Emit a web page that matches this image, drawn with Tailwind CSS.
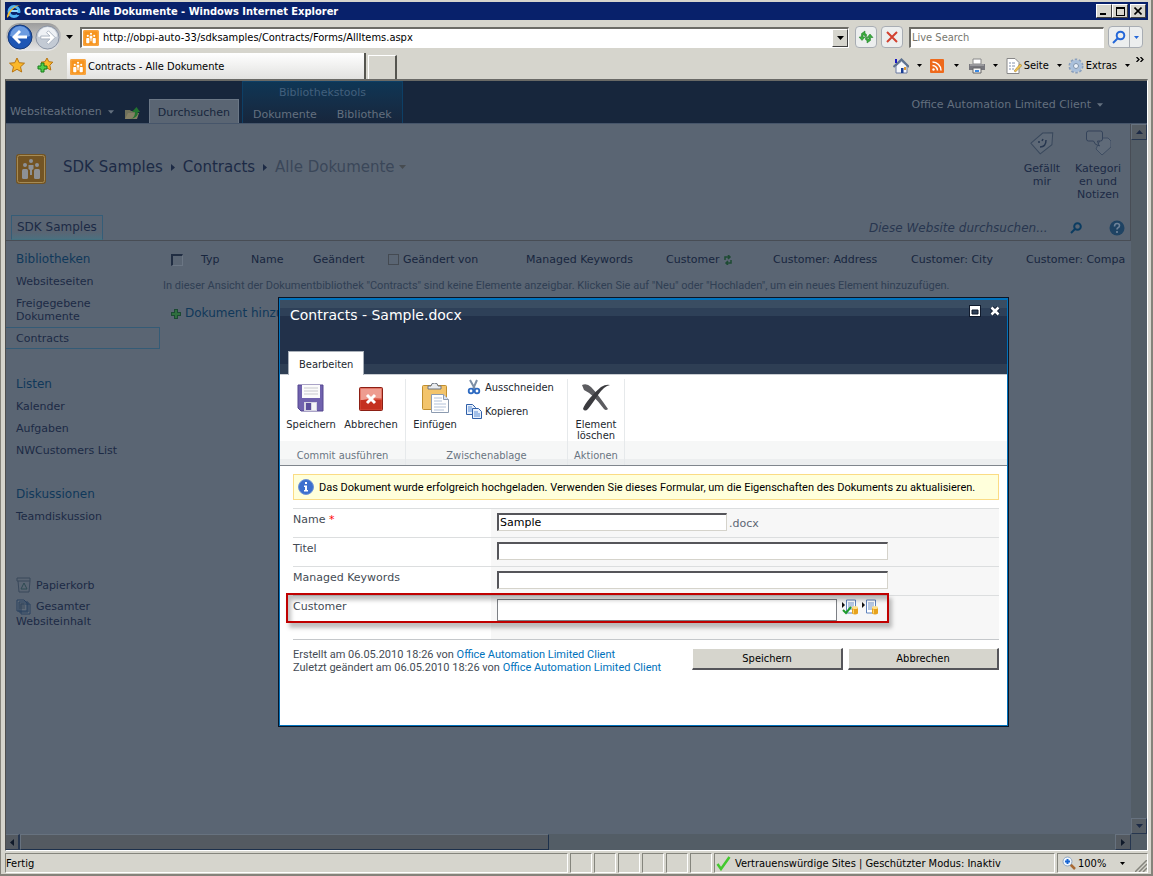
<!DOCTYPE html>
<html lang="de">
<head>
<meta charset="utf-8">
<title>Contracts - Alle Dokumente</title>
<script src="https://cdn.jsdelivr.net/npm/@tailwindcss/browser@4"></script>
</head>
<body class="h-screen overflow-hidden bg-[#d6d5cd] font-['DejaVu_Sans_Condensed','DejaVu_Sans',sans-serif] text-[11px] leading-[13px] text-black">
<svg class="hidden">
  <symbol id="people" viewBox="0 0 30 30"><rect width="30" height="30" rx="3" fill="currentColor"/><rect x="1.500" y="1.500" width="27" height="27" rx="2" fill="none" stroke="#fff" stroke-opacity=".45"/><g fill="#fff"><circle cx="9" cy="11" r="2"/><circle cx="15" cy="7" r="2"/><circle cx="21" cy="11" r="2"/><rect x="6" y="15" width="6" height="10" rx="1.500"/><rect x="18" y="15" width="6" height="10" rx="1.500"/><path d="M12.500 11h5v4l-1.500 1v5h-2v-5l-1.500-1z"/></g></symbol>
  <symbol id="down" viewBox="0 0 7 4"><path d="M0 0h7L3.500 4z" fill="currentColor"/></symbol>
  <symbol id="db" viewBox="0 0 16 16"><path d="M0 3v6l3-3z" fill="#111"/><path d="M4.500 1h9v13h-9z" fill="#fff" stroke="#5f83bd"/><path d="M6 4h6M6 6h6M6 8h6M6 10h4" stroke="#6d8fc4"/><path d="M10 8.500v6q3 2 6 0v-6z" fill="#e7a21c"/><ellipse cx="13" cy="8.500" rx="3" ry="1.500" fill="#ffe08a"/><path d="M11.500 10.500v4" stroke="#ffd86b"/></symbol>
</svg>
<div class="flex h-full flex-col border-r-2 border-b-2 border-l border-[#85837b] pr-[3px] pl-1">
  <!-- Window title -->
  <header class="mt-0.5 flex h-[18px] shrink-0 items-center bg-[#08216b] pr-0.5 pl-px text-white">
    <svg class="mr-0.5 size-4" viewBox="0 0 16 16"><circle cx="8" cy="8.500" r="5" fill="none" stroke="#4fb4f4" stroke-width="3"/><path d="M4 8h8" stroke="#8fd6ff" stroke-width="2"/><path d="M10 10h5v2h-4z" fill="#08216b"/><path d="M1 15C0 10 8 1 15 2c-5 0-11 6-12 11z" fill="#f5bc2e"/></svg>
    <h1 class="grow font-bold">Contracts - Alle Dokumente - Windows Internet Explorer</h1>
    <div class="flex h-3.5">
      <button aria-label="Minimieren" class="flex w-4 items-end border border-t-white border-r-[#404040] border-b-[#404040] border-l-white bg-[#d6d5cd] p-0.5"><span class="ml-px h-0.5 w-1.5 bg-black"></span></button>
      <button aria-label="Maximieren" class="flex w-4 items-center justify-center border border-t-white border-r-[#404040] border-b-[#404040] border-l-white bg-[#d6d5cd]"><span class="h-[9px] w-[9px] border border-t-2 border-black"></span></button>
      <button aria-label="Schließen" class="ml-0.5 flex w-4 items-center justify-center border border-t-white border-r-[#404040] border-b-[#404040] border-l-white bg-[#d6d5cd]"><svg class="size-2" viewBox="0 0 8 8"><path d="M.5.500l7 7m0-7l-7 7" stroke="#000" stroke-width="1.600"/></svg></button>
    </div>
  </header>
  <!-- Address bar -->
  <div class="flex h-8 shrink-0 items-center pt-0.5 pr-[5px] pl-px">
    <div class="flex h-7 items-center rounded-full bg-linear-to-b from-[#9c9c9c] to-[#e8e8e8] px-px">
      <button aria-label="Zurück"><svg class="size-[26px]" viewBox="0 0 26 26"><circle cx="13" cy="13" r="12" fill="#1f57b5" stroke="#173a78"/><path d="M3 12a10 10 0 0 1 20 0q-10 4-20 0" fill="#6d9ce0"/><path d="M12 6l-7 7 7 7 2-2-3.500-3.500H20v-3h-9.500L14 8z" fill="#fff"/></svg></button>
      <button aria-label="Vorwärts" class="ml-0.5"><svg class="size-[25px]" viewBox="0 0 26 26"><circle cx="13" cy="13" r="12" fill="#c3cad4" stroke="#8892a2"/><path d="M3 12a10 10 0 0 1 20 0q-10 4-20 0" fill="#eef1f5"/><path d="M14 6l7 7-7 7-2-2 3.500-3.500H6v-3h9.500L12 8z" fill="#fff" stroke="#a9b2bf"/></svg></button>
    </div>
    <svg class="mr-[7px] ml-[5px] h-1 w-[7px]"><use href="#down"/></svg>
    <div class="flex h-[21px] grow items-center border border-t-2 border-l-2 border-t-[#6b6b66] border-r-white border-b-white border-l-[#6b6b66] bg-white">
      <svg class="ml-px size-4 text-[#f7941d]"><use href="#people"/></svg>
      <input aria-label="Adresse" class="ml-1 min-w-0 grow outline-none" value="http://obpi-auto-33/sdksamples/Contracts/Forms/AllItems.aspx">
      <button aria-label="Adressliste" class="flex h-full w-4 items-center justify-center border border-t-white border-r-[#404040] border-b-[#404040] border-l-white bg-[#d6d5cd]"><svg class="h-1 w-[7px]"><use href="#down"/></svg></button>
    </div>
    <button aria-label="Aktualisieren" class="ml-1.5 flex size-[22px] items-center justify-center rounded-sm border border-[#a8adb3] bg-[#eceeee]"><svg class="size-4" viewBox="0 0 16 16"><path d="M3.500 6V4.500L7 2v2.500q2 0 1.500 3H7q0-1.500-1.500-1.500H5v2h2l-3 3.500L1 8h2z" fill="#3cab3f" stroke="#1b7a22" stroke-width=".5"/><path d="M12.500 9v2.500L9 14v-2.500q-2 0-1.500-3H9q0 1.500 1.500 1.500h.5V8.500H9l3-3.500 3 3.500h-2z" fill="#3cab3f" stroke="#1b7a22" stroke-width=".5"/></svg></button>
    <button aria-label="Stopp" class="ml-1 flex size-[22px] items-center justify-center rounded-sm border border-[#a8adb3] bg-[#eceeee]"><svg class="size-3" viewBox="0 0 12 12"><path d="M1 1l10 10M11 1L1 11" stroke="#d2402f" stroke-width="2"/></svg></button>
    <input aria-label="Suche" placeholder="Live Search" class="ml-1.5 h-[21px] w-[195px] border border-t-2 border-l-2 border-t-[#6b6b66] border-r-white border-b-white border-l-[#6b6b66] bg-white pl-px placeholder:text-[#77776f]">
    <div class="ml-1 flex h-[22px] rounded-sm border border-[#a8adb3] bg-[#eceeee]">
      <button aria-label="Suchen" class="flex w-[21px] items-center justify-center border-r border-[#a8adb3]"><svg class="size-3.5" viewBox="0 0 14 14" fill="none" stroke="#2467d8" stroke-width="2"><circle cx="8.500" cy="5.500" r="3.800"/><path d="M5.500 8.500L1 13"/></svg></button>
      <button aria-label="Suchoptionen" class="flex w-3 items-center justify-center text-[#2467d8]"><svg class="h-[3px] w-[5px]"><use href="#down"/></svg></button>
    </div>
  </div>
  <!-- Tab and command bar -->
  <div class="flex h-[27px] shrink-0 items-end pr-1 pl-1">
    <div class="mb-1.5 flex w-[58px] gap-3">
      <button aria-label="Favoriten"><svg class="size-4" viewBox="0 0 16 16"><path d="M8 1l2.200 4.700 5.300.5-4 3.600 1.200 5.200L8 12.300 3.300 15l1.200-5.200-4-3.600 5.300-.5z" fill="#fbb829" stroke="#b87411"/></svg></button>
      <button aria-label="Zu Favoriten hinzufügen"><svg class="size-4" viewBox="0 0 16 16"><path d="M10 1l1.800 3.700 4 .5-3 3 1 4.800-3.800-2-4 2 1-5-3-2.800 4-.5z" fill="#fbb829" stroke="#b87411"/><path d="M4 6h3v3h3v3H7v3H4v-3H1V9h3z" fill="#51cf4b" stroke="#187d1f"/></svg></button>
    </div>
    <div class="flex h-[26px] w-[299px] items-center border-r-2 border-[#55554f] bg-linear-to-b from-white to-[#e2e2e0] pt-px pl-[3px]"><svg class="mr-0.5 size-4 text-[#f7941d]"><use href="#people"/></svg>Contracts - Alle Dokumente</div>
    <button aria-label="Neue Registerkarte" class="ml-0.5 h-6 w-[29px] border border-r-2 border-b-0 border-t-white border-r-[#55554f] border-l-white"></button>
    <div class="mb-[5px] flex grow items-center justify-end">
      <button aria-label="Startseite"><svg class="size-4" viewBox="0 0 16 16"><path d="M3 8v7h11V8L8.500 3z" fill="#f4f6fa" stroke="#6879a0"/><path d="M.5 9L8.500 1.500 16 9" fill="none" stroke="#5d718f" stroke-width="2"/><path d="M3 1v4" stroke="#1717c4" stroke-width="2"/><path d="M8 10h2.500v5H8z" fill="#183d94"/><path d="M11 9h2v3h-2z" fill="#e09a33"/></svg></button>
      <svg class="mx-2 h-[3px] w-[5px]"><use href="#down"/></svg>
      <button aria-label="Feeds"><svg class="size-3.5" viewBox="0 0 14 14"><rect width="14" height="14" rx="1" fill="#ee6a1c"/><g fill="none" stroke="#fff" stroke-width="1.500"><path d="M2.500 3a8.500 8.500 0 0 1 8.500 8.500M2.500 6.500a5 5 0 0 1 5 5"/></g><circle cx="3.500" cy="10.500" r="1.200" fill="#fff"/></svg></button>
      <svg class="mx-2.5 h-[3px] w-[5px]"><use href="#down"/></svg>
      <button aria-label="Drucken"><svg class="size-4" viewBox="0 0 16 16"><path d="M4 1h8v5H4z" fill="#fff" stroke="#888"/><path d="M0 6h16v6H0z" fill="#77777d"/><path d="M1 7h14" stroke="#bbb"/><path d="M4 10h8v5H4z" fill="#f5f5f5" stroke="#666"/><path d="M6 12h4v2H6z" fill="#3989e3"/></svg></button>
      <svg class="mx-2 h-[3px] w-[5px]"><use href="#down"/></svg>
      <button class="flex items-center gap-0.5"><svg class="size-4" viewBox="0 0 16 16"><path d="M1 .5h8l4 4v11H1z" fill="#fff" stroke="#888"/><path d="M3 5h2M6 5h3M3 8h2M6 8h3M3 11h2M6 11h2" stroke="#8492ae"/><path d="M8 13l6-7 2 1.500L9.500 14z" fill="#f0c44e" stroke="#96712b" stroke-width=".5"/></svg>Seite<svg class="ml-1.5 h-[3px] w-[5px]"><use href="#down"/></svg></button>
      <button class="ml-1.5 flex items-center gap-0.5"><svg class="size-4" viewBox="0 0 16 16"><circle cx="8" cy="8" r="6.500" fill="none" stroke="#8aa0bd" stroke-width="2" stroke-dasharray="2.500 1.580"/><circle cx="8" cy="8" r="4.500" fill="none" stroke="#a9c0dc" stroke-width="3"/><circle cx="8" cy="8" r="2.500" fill="#eef3f9" stroke="#7890ae"/></svg>Extras<svg class="ml-1.5 h-[3px] w-[5px]"><use href="#down"/></svg></button>
      <button aria-label="Weitere Befehle" class="mb-3 ml-1.5"><svg class="h-[5px] w-2" viewBox="0 0 8 5" fill="none" stroke="#000" stroke-width="1.300"><path d="M.5 0L3 2.500.5 5M4.500 0L7 2.500 4.500 5"/></svg></button>
    </div>
  </div>

  <!-- Page under the modal backdrop -->
  <main class="relative flex min-h-0 grow flex-col overflow-hidden border border-t-2 border-t-[#6a6a66] border-r-white border-b-white border-l-[#4e4e4e] bg-[#5a6573] font-['DejaVu_Sans',sans-serif] text-[#1c2a45]">
    <div class="flex h-[43px] shrink-0 items-end border-b border-[#46556a] bg-[#17263c] text-[#64707f]">
      <button class="mb-[5px] ml-1 flex items-center gap-1.5">Websiteaktionen <svg class="h-1 w-1.5" viewBox="0 0 7 4"><path d="M0 0h7L3.500 4z" fill="currentColor"/></svg></button>
      <button aria-label="Nach oben navigieren" class="mb-0.5 ml-2.5"><svg class="size-4" viewBox="0 0 16 16"><path d="M1 5h5l1 1h6v8H1z" fill="#70715b"/><path d="M1 14l3-6h11l-2 6z" fill="#858064"/><path d="M6 14q5-1 5-7H8l4.500-5L16 7h-2q0 6-8 7z" fill="#22742f"/></svg></button>
      <a href="#" class="ml-[9px] flex h-6 items-center border border-b-0 border-[#6b7786] bg-[#5a6573] px-2 pt-0.5 text-[#17263c]">Durchsuchen</a>
      <div class="ml-[3px] flex h-full w-[161px] flex-col justify-between border-x border-t border-[#0d3f66] bg-linear-to-b from-[#0e3655] to-[#17263c] pt-1 pb-0.5">
        <div class="text-center text-[#42607d]">Bibliothekstools</div>
        <div class="flex gap-5 pl-2.5"><a href="#">Dokumente</a><a href="#">Bibliothek</a></div>
      </div>
      <button class="mb-3 mr-11 ml-auto flex items-center gap-1.5">Office Automation Limited Client <svg class="h-1 w-1.5" viewBox="0 0 7 4"><path d="M0 0h7L3.500 4z" fill="currentColor"/></svg></button>
    </div>
    <div class="flex min-h-0 grow">
      <div class="min-w-0 grow overflow-hidden">
        <div class="flex h-[117px] flex-col justify-between border-r border-b border-[#484d55]">
          <div class="flex items-start pt-1">
            <svg class="mt-[26px] ml-2.5 size-[30px] shrink-0" viewBox="0 0 30 30"><rect width="30" height="30" rx="3" fill="#735423"/><rect x="1.500" y="1.500" width="27" height="27" rx="2" fill="none" stroke="#a58b55"/><g fill="#8d9196"><circle cx="9" cy="11" r="2"/><circle cx="15" cy="7" r="2"/><circle cx="21" cy="11" r="2"/><rect x="6" y="15" width="6" height="10" rx="1.500"/><rect x="18" y="15" width="6" height="10" rx="1.500"/><path d="M12.500 11h5v4l-1.500 1v5h-2v-5l-1.500-1z"/></g></svg>
            <nav class="mt-[29px] ml-[17px] flex grow items-center text-[15px] leading-5"><a href="#">SDK Samples</a><svg class="mx-2 h-[7px] w-1" viewBox="0 0 4 7"><path d="M0 0v7l4-3.500z" fill="#1c2a45"/></svg><a href="#">Contracts</a><svg class="mx-2 h-[7px] w-1" viewBox="0 0 4 7"><path d="M0 0v7l4-3.500z" fill="#1c2a45"/></svg><a href="#" class="text-[#3a4759]">Alle Dokumente</a><svg class="ml-1 h-1 w-[7px] text-[#464b50]"><use href="#down"/></svg></nav>
            <div class="flex items-start text-center">
              <button class="flex w-14 flex-col items-center"><svg class="mt-0.5 mb-1.5 size-[26px]" viewBox="0 0 26 26"><path d="M2 14L13 3l10-1v12L12 24z" fill="#5e6977" stroke="#39485c" transform="rotate(4 13 13)"/><path d="M10 11v2M14 9l-1 2M11 17q6 0 6-7" fill="none" stroke="#26364f" stroke-width="1.500"/></svg>Gefällt<br>mir</button>
              <button class="mr-1 flex w-14 flex-col items-center"><svg class="mt-0.5 mb-1.5 size-[26px]" viewBox="0 0 26 26"><path d="M16 8h7l3 3v6l-9 8-6-6z" fill="#606b79" stroke="#3e4d62"/><path d="M1.500 3q0-2 2-2h12q2 0 2 2v6q0 2-2 2h-3q1 4 2 5-5-1-6-5h-5q-2 0-2-2z" fill="#5c6775" stroke="#34435a"/></svg>Kategori<br>en und<br>Notizen</button>
            </div>
          </div>
          <div class="flex items-end justify-between">
            <a href="#" class="ml-[5px] h-[25px] border border-[#355d78] border-b-[#44707f] bg-linear-to-b from-transparent from-70% to-[#4c6f7f] px-[5px] text-[12px] leading-[23px]">SDK Samples</a>
            <div class="mb-1 flex items-center"><input aria-label="Diese Website durchsuchen" placeholder="Diese Website durchsuchen..." class="w-[197px] text-[12px] italic leading-4 placeholder:text-[#28364f]">
              <button aria-label="Suchen" class="ml-1"><svg class="size-3" viewBox="0 0 12 12" fill="none" stroke="#0b3c61" stroke-width="2"><circle cx="7.500" cy="4.500" r="3.300"/><path d="M5 7L1 11"/></svg></button>
              <button aria-label="Hilfe" class="mr-[5px] ml-[27px]"><svg class="size-4" viewBox="0 0 16 16"><circle cx="8" cy="8" r="7.500" fill="#1f4363"/><path d="M5.500 6.500q0-3 2.500-3t2.500 2q0 1.500-1.500 2.300-1 .5-1 1.700M8 11v2" fill="none" stroke="#70849a" stroke-width="1.600"/></svg></button></div>
          </div>
        </div>
        <div class="flex">
          <nav class="w-[154px] shrink-0 pt-3 leading-[13px]">
            <h2 class="ml-2.5 text-[12px] text-[#10385a]">Bibliotheken</h2>
            <ul class="mt-[9px] *:pl-2.5"><li class="mb-[9px]"><a href="#">Websiteseiten</a></li><li class="mb-1"><a href="#">Freigegebene<br>Dokumente</a></li><li class="h-[22px] border border-l-0 border-[#345b76] leading-[21px]"><a href="#">Contracts</a></li></ul>
            <h2 class="mt-[29px] ml-2.5 text-[12px] text-[#10385a]">Listen</h2>
            <ul class="mt-[9px] space-y-[9px] pl-2.5"><li><a href="#">Kalender</a></li><li><a href="#">Aufgaben</a></li><li><a href="#">NWCustomers List</a></li></ul>
            <h2 class="mt-[31px] ml-2.5 text-[12px] text-[#10385a]">Diskussionen</h2>
            <ul class="mt-[9px] pl-2.5"><li><a href="#">Teamdiskussion</a></li></ul>
            <ul class="mt-[54px] pl-2.5"><li><a href="#" class="flex items-center gap-1"><svg class="size-4" viewBox="0 0 16 16" fill="none" stroke="#39485b"><path d="M1 1h13v3H1zM2 4l1 11h10l1-11"/><path d="M5 12l3-6 3 6z" stroke="#2d4a52"/></svg>Papierkorb</a></li><li class="mt-1.5"><a href="#"><svg class="mr-1 inline size-4" viewBox="0 0 16 16" fill="#5f6a78" stroke="#29405f"><path d="M5 5h9v10H5zM3 3h9v10H3zM1 1h7l3 3v8H1z"/><path d="M3 5h5M3 7h6M3 9h6" stroke="#39485b"/></svg>Gesamter<br>Websiteinhalt</a></li></ul>
          </nav>
          <section class="min-w-0 grow pt-3 pl-[3px]">
            <table class="ml-2 w-[962px] table-fixed text-left whitespace-nowrap text-[#18263e]">
              <thead><tr class="*:font-normal *:align-middle">
                <th class="w-[30px]"><input type="checkbox" aria-label="Alle auswählen" class="block size-3 appearance-none border border-t-2 border-l-2 border-[#6b7684] border-t-[#202d42] border-l-[#202d42]"></th>
                <th class="w-[50px]">Typ</th><th class="w-[62px]">Name</th><th class="w-[75px]">Geändert</th>
                <th class="w-[138px]"><label class="flex items-center gap-1"><input type="checkbox" class="size-[11px] appearance-none border border-[#444a52]">Geändert von</label></th>
                <th class="w-[140px]">Managed Keywords</th>
                <th class="w-[107px]"><span class="flex items-center">Customer<svg class="ml-1 size-2.5" viewBox="0 0 8 10" fill="none" stroke="#1e4b33" stroke-width="1.500"><path d="M1 5V2h4M4 0l2 2-2 2M7 5v3H3M4 6L2 8l2 2"/></svg></span></th>
                <th class="w-[138px]">Customer: Address</th><th class="w-[115px]">Customer: City</th><th>Customer: Compa</th>
              </tr></thead>
            </table>
            <p class="mt-[13px] font-[Roboto,sans-serif] whitespace-nowrap text-[#303f54]">In dieser Ansicht der Dokumentbibliothek "Contracts" sind keine Elemente anzeigbar. Klicken Sie auf "Neu" oder "Hochladen", um ein neues Element hinzuzufügen.</p>
            <a href="#" class="mt-[15px] ml-2 flex items-center gap-1 text-[12px] text-[#10385a]"><svg class="size-2.5" viewBox="0 0 10 10"><path d="M3 0h4v3h3v4H7v3H3V7H0V3h3z" fill="#1c4a33"/><path d="M4 1h2v3h3v2H6v3H4V6H1V4h3z" fill="#2f6f3e"/></svg>Dokument hinzu</a>
          </section>
        </div>
      </div>
      <!-- Vertical scrollbar -->
      <div class="flex w-4 shrink-0 flex-col justify-between bg-[#535d66]">
        <button aria-label="Nach oben" class="flex size-4 items-center justify-center border border-t-[#67727f] border-r-[#26364f] border-b-[#26364f] border-l-[#67727f] bg-[#565d64]"><svg class="h-1 w-[7px] rotate-180"><use href="#down"/></svg></button>
        <button aria-label="Nach unten" class="flex size-4 items-center justify-center border border-t-[#67727f] border-r-[#26364f] border-b-[#26364f] border-l-[#67727f] bg-[#565d64]"><svg class="h-1 w-[7px]"><use href="#down"/></svg></button>
      </div>
    </div>
    <!-- Horizontal scrollbar -->
    <div class="flex h-4 shrink-0 bg-[#535d66] pr-4 text-[#101a2a]">
      <button aria-label="Nach links" class="flex w-3.5 items-center justify-center border-t border-r-2 border-b border-t-[#67727f] border-r-[#26364f] border-b-[#26364f] bg-[#545a61]"><svg class="h-[7px] w-1" viewBox="0 0 4 7"><path d="M4 0v7L0 3.500z" fill="currentColor"/></svg></button>
      <div class="w-[47%] border border-t-[#67727f] border-r-[#1d304b] border-b-[#1d304b] border-l-[#67727f] bg-[#545a61]"></div>
      <button aria-label="Nach rechts" class="ml-auto flex w-4 items-center justify-center border border-t-[#67727f] border-r-[#26364f] border-b-[#26364f] border-l-[#67727f] bg-[#545a61]"><svg class="h-[7px] w-1" viewBox="0 0 4 7"><path d="M0 0v7l4-3.500z" fill="currentColor"/></svg></button>
    </div>

    <!-- Modal dialog -->
    <div role="dialog" aria-label="Contracts - Sample.docx" class="absolute top-[216px] left-[272px] flex h-[430px] w-[731px] flex-col border border-[#0a1526] bg-white text-[#444b54]">
     <div class="flex grow flex-col border border-t-2 border-[#0072bc]">
      <div class="flex h-[75px] shrink-0 flex-col justify-between bg-[linear-gradient(#3a4d62_0_8px,#2e4058_8px_16px,#22314a_16px_64px,#2e3e54_64px)]">
        <div class="flex items-start px-2.5 pt-1">
          <h2 class="grow pt-px text-[14px] leading-5 text-white">Contracts - Sample.docx</h2>
          <button aria-label="Maximieren" class="mt-px mr-2"><svg class="size-3" viewBox="0 0 12 12"><rect x=".5" y=".5" width="11" height="11" fill="#fff" stroke="#101a2c"/><path d="M3 5h6v4H3z" fill="#2e4058" stroke="#101a2c"/></svg></button>
          <button aria-label="Schließen" class="mt-px -mr-1"><svg class="size-3" viewBox="0 0 12 12"><path d="M2.500 2.500l7 7m0-7l-7 7" stroke="#101a2c" stroke-width="4.500"/><path d="M2.500 2.500l7 7m0-7l-7 7" stroke="#fff" stroke-width="2.600"/></svg></button>
        </div>
        <div class="flex border-b border-[#c9cdd2]"><a href="#" class="-mb-px ml-2 flex h-6 items-center border border-b-0 border-[#a9b0b9] bg-white px-2.5 pt-px font-['DejaVu_Sans_Condensed','DejaVu_Sans',sans-serif] text-[#22272e]">Bearbeiten</a></div>
      </div>
      <!-- Ribbon -->
      <div class="flex h-[91px] shrink-0 border-b border-[#7f858c] bg-[linear-gradient(#fff_0_66px,#f6f7f7_66px_84px,#eceeef_84px)] pt-1 font-['DejaVu_Sans_Condensed','DejaVu_Sans',sans-serif] text-[#22272e]">
        <div class="flex w-[126px] flex-col justify-between border-r border-[#e6e9eb] pb-[3px]">
          <div class="flex">
            <button class="flex w-[62px] flex-col items-center pt-1"><svg class="mb-[5px] size-[30px]" viewBox="0 0 30 30"><path d="M2 2h25v26H5l-3-3z" fill="#7062ae" stroke="#54468f"/><path d="M6 2h18v13H6z" fill="#fbfbfb"/><path d="M8 5h14M8 8h14M8 11h14" stroke="#c9c9ce"/><path d="M8 19h13v9H8z" fill="#d5d3e2"/><path d="M10 20h5v7h-5z" fill="#5b4e9c"/><path d="M16 20h4v7h-4z" fill="#f4f4f8"/></svg>Speichern</button>
            <button class="flex w-[58px] flex-col items-center pt-1"><svg class="mb-[5px] size-[30px]" viewBox="0 0 30 30"><rect x="3.500" y="4.500" width="23" height="23" rx="1" fill="#d9503f" stroke="#8c1f14"/><path d="M4.500 5.500h21v10q-11-1-21 2z" fill="#ee9c90"/><path d="M4.500 17h21v9.500h-21z" fill="#c4301f"/><path d="M11 12l8 8m0-8l-8 8" stroke="#fff" stroke-width="3"/></svg>Abbrechen</button>
          </div>
          <div class="text-center text-[#697481]">Commit ausführen</div>
        </div>
        <div class="flex w-[162px] flex-col justify-between border-r border-[#e6e9eb] pb-[3px]">
          <div class="flex">
            <button class="flex w-[58px] flex-col items-center pt-1"><svg class="mb-[5px] size-[30px]" viewBox="0 0 30 30"><rect x="2.500" y="2.500" width="24" height="24" rx="1" fill="#f3c46b" stroke="#c08e2f"/><path d="M8 3h3q0-3 3.500-3T18 3h3v3H8z" fill="#e9ebee" stroke="#6e7580"/><path d="M11.500 11.500h12l5 5v13h-17z" fill="#fff" stroke="#8c9bb0"/><path d="M23.500 11.500v5h5" fill="#dde4ee" stroke="#8c9bb0"/><path d="M14 15h8M14 18h8M14 21h12M14 24h12M14 27h10" stroke="#b3c2d9"/></svg>Einfügen</button>
            <div class="flex flex-col items-start gap-2 pl-0.5">
              <button class="flex items-center gap-[3px]"><svg class="size-4" viewBox="0 0 16 16"><path d="M4 1l5 9M11 1L7 10" stroke="#7d8fa6" stroke-width="2"/><circle cx="5" cy="12" r="2.300" fill="none" stroke="#2d6ac1" stroke-width="1.800"/><circle cx="11" cy="12" r="2.300" fill="none" stroke="#2d6ac1" stroke-width="1.800"/></svg>Ausschneiden</button>
              <button class="flex items-center gap-[3px]"><svg class="size-4" viewBox="0 0 16 16"><g fill="#e8f0fb" stroke="#2f5fa8"><path d="M.5 1.500h6l3 3v7h-9z"/><path d="M6.500 5.500h6l3 3v7h-9z"/></g><path d="M2 4h4M2 6h4M2 8h4M8 9h4M8 11h6M8 13h6" stroke="#5a8ed6"/></svg>Kopieren</button>
            </div>
          </div>
          <div class="text-center text-[#697481]">Zwischenablage</div>
        </div>
        <div class="flex w-[57px] flex-col justify-between border-r border-[#e6e9eb] pb-[3px]">
          <button class="flex flex-col items-center pt-1 leading-[11px]"><svg class="mb-1.5 size-[30px]" viewBox="0 0 30 30"><path d="M1 2q5-2 9 2 6 6 17 22-2 2-4 0Q12 11 3 7z" fill="#5c5c60"/><path d="M29 2q-6 1-12 10T7 26q-3 3-5 0 1-4 7-11T20 4q5-3 9-2z" fill="#3b3b3f"/></svg><span>Element<br>löschen</span></button>
          <div class="text-center text-[#697481]">Aktionen</div>
        </div>
      </div>
      <!-- Form -->
      <div class="pt-2 pr-2 pl-[13px]">
        <div class="flex h-[26px] items-center gap-[5px] border border-[#fbdc84] bg-[#ffffdb] pl-1 font-[Roboto,sans-serif] whitespace-nowrap text-black">
          <svg class="size-4 shrink-0" viewBox="0 0 16 16"><circle cx="8" cy="8" r="7.500" fill="#3c6fce" stroke="#6f94d8"/><path d="M7 3h2v2H7zM6 6.500h3V11h1v1.500H6V11h1V8H6z" fill="#fff"/></svg>Das Dokument wurde erfolgreich hochgeladen. Verwenden Sie dieses Formular, um die Eigenschaften des Dokuments zu aktualisieren.</div>
        <form class="relative mt-2">
          <div class="grid grid-cols-[198px_1fr] border-b border-[#c5c8cb]">
            <label for="f-name" class="h-[29px] border-t border-[#dcdedf] pt-1">Name <span class="text-[#f00]">*</span></label>
            <div class="flex items-start border-t border-[#dcdedf] bg-[#f7f7f7] pt-1 pl-1.5"><input id="f-name" value="Sample" class="h-[18px] w-[230px] border border-t-2 border-l-2 border-t-[#55555a] border-r-[#d5d3cb] border-b-[#d5d3cb] border-l-[#55555a] bg-white pl-px text-black"><span class="pt-1 pl-0.5 text-[#5c6673]">.docx</span></div>
            <label for="f-title" class="h-[29px] border-t border-[#dcdedf] pt-1">Titel</label>
            <div class="border-t border-[#dcdedf] bg-[#f7f7f7] pt-1 pl-1.5"><input id="f-title" class="block h-[18px] w-[391px] border border-t-2 border-l-2 border-t-[#55555a] border-r-[#d5d3cb] border-b-[#d5d3cb] border-l-[#55555a] bg-white"></div>
            <label for="f-key" class="h-[29px] border-t border-[#dcdedf] pt-1">Managed Keywords</label>
            <div class="border-t border-[#dcdedf] bg-[#f7f7f7] pt-1 pl-1.5"><input id="f-key" class="block h-[18px] w-[391px] border border-t-2 border-l-2 border-t-[#55555a] border-r-[#d5d3cb] border-b-[#d5d3cb] border-l-[#55555a] bg-white"></div>
            <label for="f-cust" class="h-11 border-t border-[#dcdedf] pt-1">Customer</label>
            <div class="flex items-start gap-1 border-t border-[#dcdedf] bg-[#f7f7f7] pt-[3px] pl-1.5"><input id="f-cust" class="mr-px h-[22px] w-[340px] border border-[#7d8085] bg-white"><button type="button" aria-label="Kunden prüfen"><svg class="size-4" viewBox="0 0 16 16"><use href="#db"/><path d="M1 11l3 3 5-6" fill="none" stroke="#1d9a2a" stroke-width="2"/></svg></button><button type="button" aria-label="Kunden auswählen"><svg class="size-4"><use href="#db"/></svg></button></div>
          </div>
          <!-- Callout around the Customer row -->
          <div class="pointer-events-none absolute top-[85px] left-[-7px] h-[30px] w-[603px] border-2 border-[#c00000] shadow-[3px_5px_4px_#00000040,inset_3px_5px_4px_#00000040]"></div>
          <div class="flex items-start justify-between pt-2">
            <p class="font-[Roboto,sans-serif]">Erstellt am 06.05.2010 18:26 von <a href="#" class="text-[#0072bc]">Office Automation Limited Client</a><br>Zuletzt geändert am 06.05.2010 18:26 von <a href="#" class="text-[#0072bc]">Office Automation Limited Client</a></p>
            <div class="flex gap-[5px] font-['DejaVu_Sans_Condensed','DejaVu_Sans',sans-serif] text-black"><button type="button" class="h-[22px] w-[151px] border border-r-2 border-b-2 border-t-white border-r-[#55555a] border-b-[#55555a] border-l-white bg-[#d6d5cd]">Speichern</button><button type="button" class="h-[22px] w-[151px] border border-r-2 border-b-2 border-t-white border-r-[#55555a] border-b-[#55555a] border-l-white bg-[#d6d5cd]">Abbrechen</button></div>
          </div>
        </form>
      </div>
     </div>
    </div>
  </main>

  <!-- Status bar -->
  <footer class="mt-0.5 mb-px flex h-5 shrink-0 gap-0.5 *:flex *:items-center *:border *:border-t-[#85857d] *:border-r-white *:border-b-white *:border-l-[#85857d]">
    <div class="grow">Fertig</div>
    <div class="w-[22px]"></div><div class="w-[22px]"></div><div class="w-[22px]"></div><div class="w-[22px]"></div><div class="w-[22px]"></div><div class="w-[22px]"></div>
    <div class="w-[341px] gap-[3px] pl-px"><svg class="size-4" viewBox="0 0 16 16"><path d="M1.500 9l3.500 5L13.500 2" fill="none" stroke="#43c92e" stroke-width="2.500"/></svg>Vertrauenswürdige Sites | Geschützter Modus: Inaktiv</div>
    <div class="w-[91px] justify-between pl-1"><button class="flex items-center gap-0.5"><svg class="size-3.5" viewBox="0 0 14 14"><path d="M8 8l5 5" stroke="#a96a34" stroke-width="2.500"/><circle cx="5.500" cy="5.500" r="4.500" fill="#eef6ff" stroke="#90a6c0"/><path d="M5.500 3v5M3 5.500h5" stroke="#1765d2" stroke-width="2"/></svg>100%<svg class="ml-3 h-[3px] w-[5px]"><use href="#down"/></svg></button><svg class="size-3 self-end" viewBox="0 0 12 12" stroke="#85857d" stroke-width="1.500"><path d="M0 12L12 0M4 12l8-8M8 12l4-4"/></svg></div>
  </footer>
</div>
</body>
</html>
